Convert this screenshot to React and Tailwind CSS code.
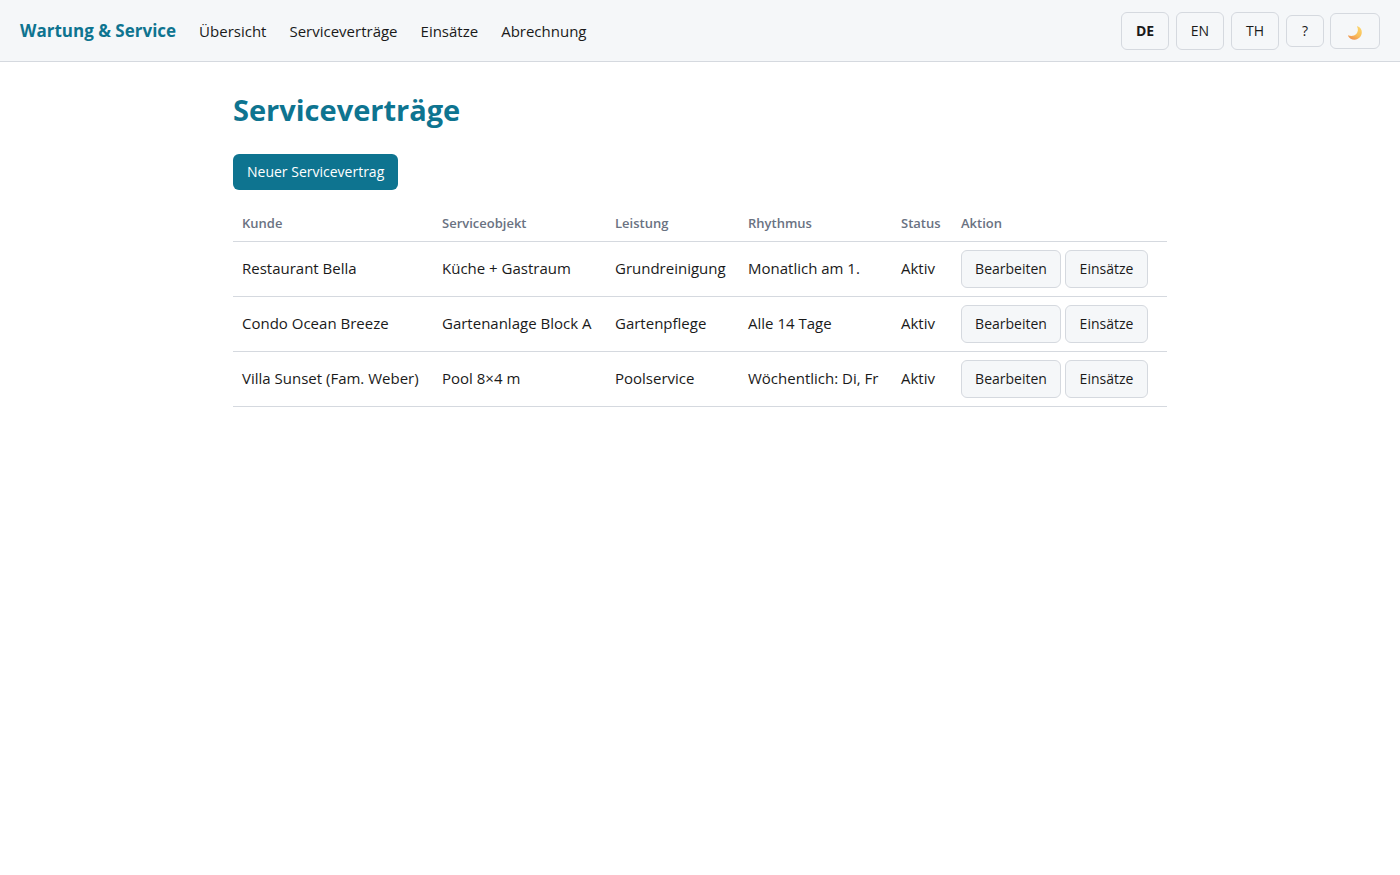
import { useState } from "react";

const NAV_LINKS = ["Übersicht", "Serviceverträge", "Einsätze", "Abrechnung"];
const LANGUAGES = ["DE", "EN", "TH"];

const COLUMNS = [
  { label: "Kunde", width: "w-[200px]" },
  { label: "Serviceobjekt", width: "w-[173px]" },
  { label: "Leistung", width: "w-[133px]" },
  { label: "Rhythmus", width: "w-[153px]" },
  { label: "Status", width: "w-[60px]" },
  { label: "Aktion", width: "" },
];

const CONTRACTS = [
  {
    id: 1,
    customer: "Restaurant Bella",
    object: "Küche + Gastraum",
    service: "Grundreinigung",
    rhythm: "Monatlich am 1.",
    status: "Aktiv",
  },
  {
    id: 2,
    customer: "Condo Ocean Breeze",
    object: "Gartenanlage Block A",
    service: "Gartenpflege",
    rhythm: "Alle 14 Tage",
    status: "Aktiv",
  },
  {
    id: 3,
    customer: "Villa Sunset (Fam. Weber)",
    object: "Pool 8×4 m",
    service: "Poolservice",
    rhythm: "Wöchentlich: Di, Fr",
    status: "Aktiv",
  },
];

const MoonIcon = () => (
  <svg width="16" height="16" viewBox="0 0 16 16" aria-hidden="true">
    <defs>
      <linearGradient id="moon" x1="0.8" y1="0" x2="0.3" y2="1">
        <stop offset="0" stopColor="#fbd56b" />
        <stop offset="0.6" stopColor="#f9bf5c" />
        <stop offset="1" stopColor="#ee9250" />
      </linearGradient>
    </defs>
    <path
      d="M10.6 1.2C13.4 2.3 15 4.6 14.8 7.6C14.6 11.6 11.6 14.6 7.7 14.7C4.8 14.8 2.3 13.3 1.1 10.9C0.9 10.5 1.2 10.2 1.6 10.4C4.3 11.4 7.4 10.9 9.3 8.9C11.1 7 11.4 4.2 10.1 1.8C9.9 1.4 10.2 1 10.6 1.2Z"
      fill="url(#moon)"
    />
  </svg>
);

const Button = ({ className = "", children, ...props }) => (
  <button
    type="button"
    className={`inline-flex items-center justify-center rounded-md border border-[#d5d9df] bg-[#f5f7f9] hover:bg-gray-200 ${className}`}
    {...props}
  >
    {children}
  </button>
);

const Header = () => {
  const [language, setLanguage] = useState("DE");

  return (
    <header className="flex items-center justify-between gap-6 border-b border-[#d5d9df] bg-[#f5f7f9] px-5 pt-3 pb-[11px]">
      <div className="flex items-center gap-[23px]">
        <span className="text-[17px] leading-6 font-bold text-[#0e7490]">
          Wartung & Service
        </span>
        <nav className="flex items-center gap-[23px]">
          {NAV_LINKS.map((link) => (
            <a key={link} href="#" className="text-[15px] leading-6 hover:underline">
              {link}
            </a>
          ))}
        </nav>
      </div>

      <div className="flex items-center gap-[6px]">
        <div className="flex items-center gap-[7px]">
          {LANGUAGES.map((lang) => (
            <Button
              key={lang}
              aria-pressed={lang === language}
              onClick={() => setLanguage(lang)}
              className={`h-[38px] w-12 text-sm ${lang === language ? "font-bold" : ""}`}
            >
              {lang}
            </Button>
          ))}
          <Button aria-label="Hilfe" className="h-8 w-[38px] text-sm">
            ?
          </Button>
        </div>
        <Button aria-label="Dunkles Design" className="h-9 w-[50px] pt-1">
          <MoonIcon />
        </Button>
      </div>
    </header>
  );
};

const ContractTable = () => (
  <table className="mt-4 w-full table-fixed border-collapse text-left">
    <thead>
      <tr className="border-b border-[#d5d9df]">
        {COLUMNS.map((col) => (
          <th
            key={col.label}
            scope="col"
            className={`h-[35px] px-[9px] text-[13px] font-semibold text-gray-500 ${col.width}`}
          >
            {col.label}
          </th>
        ))}
      </tr>
    </thead>
    <tbody className="text-[15px] whitespace-nowrap">
      {CONTRACTS.map((contract) => (
        <tr key={contract.id} className="border-b border-[#d5d9df]">
          <td className="px-[9px]">{contract.customer}</td>
          <td className="px-[9px]">{contract.object}</td>
          <td className="px-[9px]">{contract.service}</td>
          <td className="px-[9px]">{contract.rhythm}</td>
          <td className="px-[9px]">{contract.status}</td>
          <td className="px-[9px] py-2">
            <div className="flex gap-1">
              <Button className="h-[38px] w-[100px] text-sm">Bearbeiten</Button>
              <Button className="h-[38px] w-[83px] text-sm">Einsätze</Button>
            </div>
          </td>
        </tr>
      ))}
    </tbody>
  </table>
);

const App = () => (
  <div className="min-h-screen bg-white font-['Open_Sans','Noto_Sans',sans-serif] text-[#1a1a1a]">
    <Header />
    <main className="mx-auto max-w-[974px] px-5 pt-7">
      <h1 className="text-[29px] leading-10 font-bold text-[#0e7490]">
        Serviceverträge
      </h1>
      <button
        type="button"
        className="mt-6 block h-9 rounded-md bg-[#0e7490] px-[14px] text-sm text-white hover:bg-cyan-800"
      >
        Neuer Servicevertrag
      </button>
      <ContractTable />
    </main>
  </div>
);

export default App;
